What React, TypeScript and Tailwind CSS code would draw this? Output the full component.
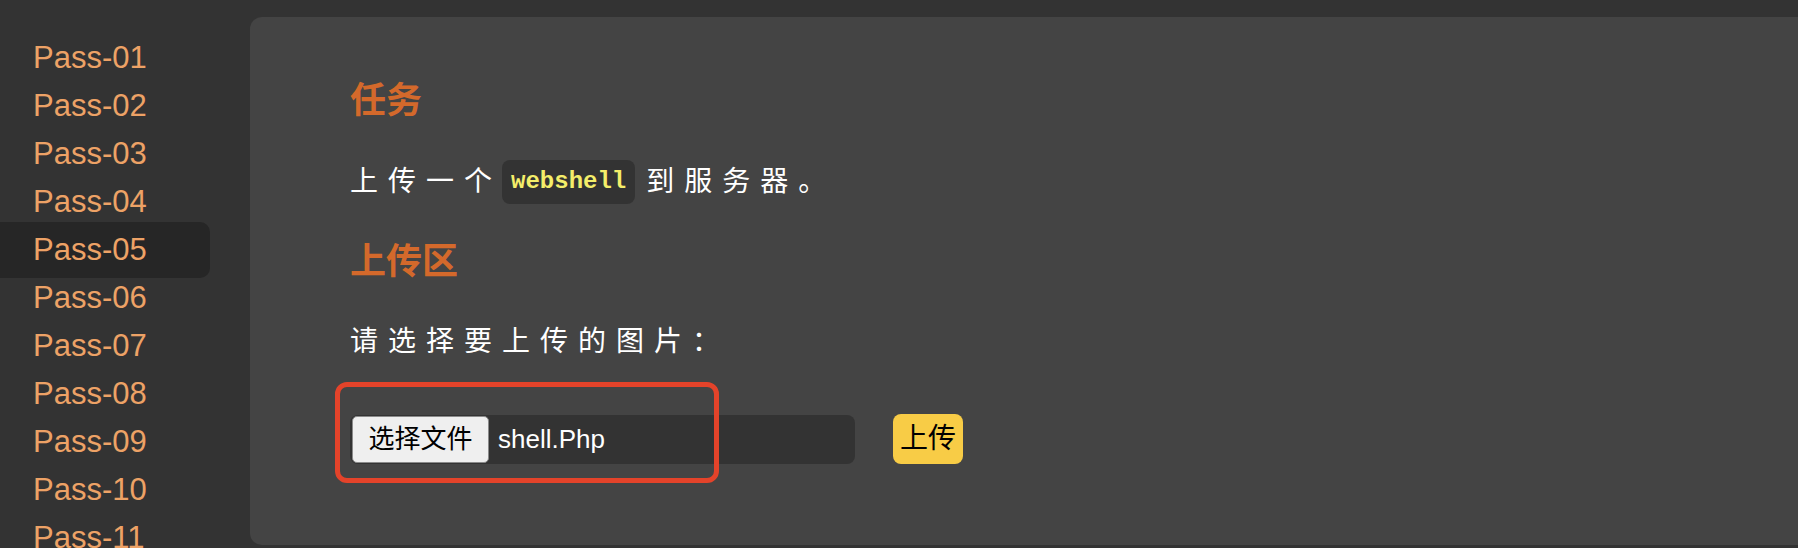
import React from "react";

const passes = Array.from({ length: 11 }, (_, i) => `Pass-${String(i + 1).padStart(2, "0")}`);

const App = () => {
  return (
    <div className="flex h-[548px] w-full overflow-hidden bg-[#333333] font-['Liberation_Sans','Noto_Sans_CJK_SC',sans-serif]">
      <nav className="w-[250px] shrink-0 pt-[34px]">
        {passes.map((p) => (
          <div
            key={p}
            className={
              p === "Pass-05"
                ? "-my-[4px] w-[210px] rounded-r-[10px] bg-[#262626] py-[4px]"
                : ""
            }
          >
            <a className="block pl-[33px] text-[31px] leading-[48px] text-[#eda266]">{p}</a>
          </div>
        ))}
      </nav>

      <main className="mb-[3px] mt-[17px] flex-1 rounded-l-[12px] bg-[#444444] pl-[100px] pt-[62px]">
        <h2 className="text-[36px] font-bold leading-[44px] text-[#d4692b]">任务</h2>

        <div className="mt-[37px] flex h-[44px] items-center text-[28px] leading-[44px] text-white">
          <span className="tracking-[10px]">上传一个</span>
          <code className="flex h-[44px] items-center rounded-[8px] bg-[#333333] px-[9px] font-['Liberation_Mono',monospace] text-[24px] font-bold text-[#f4ee6a]">
            webshell
          </code>
          <span className="ml-[11px] tracking-[10px]">到服务器。</span>
        </div>

        <h2 className="mt-[36px] text-[36px] font-bold leading-[44px] text-[#d4692b]">上传区</h2>

        <p className="mt-[36px] text-[28px] leading-[44px] tracking-[10px] text-white">
          请选择要上传的图片：
        </p>

        <div className="relative mt-[50px] flex items-center gap-[38px]">
          <div className="flex h-[49px] w-[505px] items-center rounded-[8px] bg-[#333333] pl-[2px]">
            <button className="h-[47px] w-[137px] rounded-[5px] border border-[#8a8a8a] bg-[#efefef] text-[26px] text-black">
              选择文件
            </button>
            <span className="ml-[9px] text-[26px] text-white">shell.Php</span>
          </div>
          <button className="h-[50px] w-[70px] rounded-[8px] bg-[#f8cc46] text-[28px] text-black">
            上传
          </button>
          <div className="pointer-events-none absolute -left-[15px] -top-[32px] h-[101px] w-[384px] rounded-[12px] border-[5px] border-[#e4432a]" />
        </div>
      </main>
    </div>
  );
};

export default App;
